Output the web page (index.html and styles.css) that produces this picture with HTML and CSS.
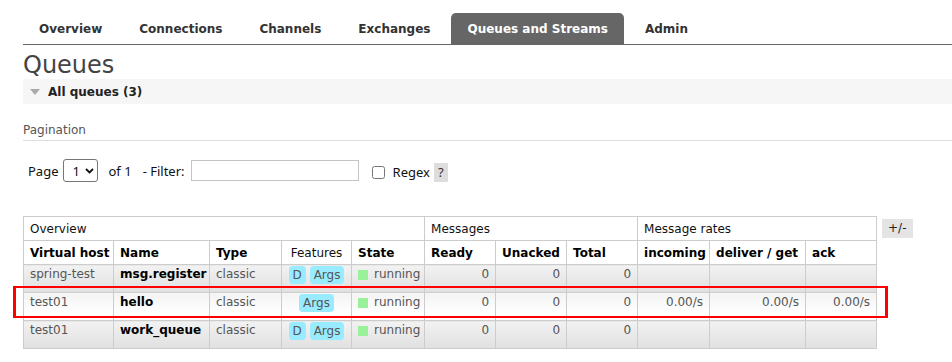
FILE: index.html
```html
<!DOCTYPE html>
<html lang="en">
<head>
    <meta charset="UTF-8">
    <meta name="viewport" content="width=device-width, initial-scale=1.0">
    <title>RabbitMQ Management - Queues</title>
    <link rel="stylesheet" href="styles.css">
</head>
<body>

    <ul class="tabs">
        <li><a href="#">Overview</a></li>
        <li><a href="#">Connections</a></li>
        <li><a href="#">Channels</a></li>
        <li><a href="#">Exchanges</a></li>
        <li class="active"><a href="#">Queues and Streams</a></li>
        <li><a href="#">Admin</a></li>
    </ul>

    <div class="main">
        <h1>Queues</h1>

        <div class="section">
            <h2 class="section-title"><span class="arrow"></span>All queues (3)</h2>

            <div class="section-body">
                <h3 class="pagination-title">Pagination</h3>

                <div class="filter-row">
                    <span class="page-label">Page</span>
                    <div class="select-box">
                        <span>1</span>
                        <svg width="9" height="6" viewBox="0 0 9 6"><path d="M1 1 L4.5 4.5 L8 1" fill="none" stroke="#111" stroke-width="1.8"/></svg>
                    </div>
                    <span class="of-label">of 1</span>
                    <span class="filter-label">- Filter:</span>
                    <input type="text" class="filter-input">
                    <label class="regex"><input type="checkbox"> Regex</label>
                    <span class="help">?</span>
                </div>

                <div class="table-area">
                    <table class="list">
                        <colgroup>
                            <col class="w90"><col class="w96"><col class="w72"><col class="w70"><col class="w73">
                            <col class="w71"><col class="w71"><col class="w71">
                            <col class="w72"><col class="w96"><col class="w71">
                        </colgroup>
                        <thead>
                            <tr>
                                <th colspan="5">Overview</th>
                                <th colspan="3">Messages</th>
                                <th colspan="3">Message rates</th>
                            </tr>
                            <tr class="sub">
                                <th>Virtual host</th>
                                <th>Name</th>
                                <th>Type</th>
                                <th class="plain">Features</th>
                                <th>State</th>
                                <th>Ready</th>
                                <th>Unacked</th>
                                <th>Total</th>
                                <th>incoming</th>
                                <th>deliver / get</th>
                                <th>ack</th>
                            </tr>
                        </thead>
                        <tbody>
                            <tr class="alt1">
                                <td>spring-test</td>
                                <td class="name">msg.register</td>
                                <td>classic</td>
                                <td class="features"><abbr class="badge">D</abbr> <abbr class="badge">Args</abbr></td>
                                <td><span class="state"></span>running</td>
                                <td class="num">0</td>
                                <td class="num">0</td>
                                <td class="num">0</td>
                                <td class="num"></td>
                                <td class="num"></td>
                                <td class="num"></td>
                            </tr>
                            <tr class="alt2">
                                <td>test01</td>
                                <td class="name">hello</td>
                                <td>classic</td>
                                <td class="features"><abbr class="badge">Args</abbr></td>
                                <td><span class="state"></span>running</td>
                                <td class="num">0</td>
                                <td class="num">0</td>
                                <td class="num">0</td>
                                <td class="num">0.00/s</td>
                                <td class="num">0.00/s</td>
                                <td class="num">0.00/s</td>
                            </tr>
                            <tr class="alt1">
                                <td>test01</td>
                                <td class="name">work_queue</td>
                                <td>classic</td>
                                <td class="features"><abbr class="badge">D</abbr> <abbr class="badge">Args</abbr></td>
                                <td><span class="state"></span>running</td>
                                <td class="num">0</td>
                                <td class="num">0</td>
                                <td class="num">0</td>
                                <td class="num"></td>
                                <td class="num"></td>
                                <td class="num"></td>
                            </tr>
                        </tbody>
                    </table>
                    <span class="toggle">+/-</span>
                    <div class="highlight"></div>
                </div>
            </div>
        </div>
    </div>

</body>
</html>
```

FILE: styles.css
```css
body {
    font-family: "DejaVu Sans", Verdana, sans-serif;
    font-size: 12px;
    color: #484848;
    background: #fff;
    margin: 0;
}
a {
    text-decoration: none;
}
.tabs {
    display: flex;
    list-style: none;
    margin: 13px 0 0 23px;
    padding: 0;
    border-bottom: 1px solid #666;
}
.tabs li {
    margin-right: 5px;
    border-radius: 5px 5px 0 0;
}
.tabs a {
    display: block;
    padding: 2px 16px 0;
    line-height: 29px;
    font-weight: bold;
    color: #333;
}
.tabs li.active {
    background: #666;
}
.tabs li.active a {
    color: #fff;
}
.main {
    margin-left: 23px;
}
h1 {
    margin: 0;
    padding-top: 6px;
    font-size: 24px;
    line-height: 28px;
    font-weight: normal;
    color: #444;
}
.section-title {
    display: flex;
    align-items: center;
    margin: 0;
    height: 25px;
    padding-top: 1px;
    box-sizing: border-box;
    background: #f6f6f6;
    font-size: 12px;
    color: #222;
}
.arrow {
    width: 0;
    height: 0;
    margin: 0 8px 0 7px;
    border-left: 5px solid transparent;
    border-right: 5px solid transparent;
    border-top: 6px solid #aaa;
}
.pagination-title {
    margin: 18px 0 0;
    padding-bottom: 2px;
    font-size: 12px;
    line-height: 16px;
    font-weight: normal;
    color: #555;
    border-bottom: 1px solid #ddd;
}
.filter-row {
    display: flex;
    align-items: center;
    margin-top: 18px;
    padding-left: 5px;
    height: 23px;
    font-family: "Noto Sans", "Open Sans", sans-serif;
    font-size: 13px;
    color: #111;
}
.select-box {
    display: flex;
    align-items: center;
    justify-content: space-between;
    box-sizing: border-box;
    width: 35px;
    height: 23px;
    margin-left: 4px;
    padding: 0 3px 0 9px;
    border: 1px solid #767676;
    border-radius: 3px;
}
.of-label {
    margin-left: 11px;
}
.filter-label {
    margin-left: 11px;
}
.filter-input {
    box-sizing: border-box;
    width: 168px;
    height: 21px;
    margin: 0 0 0 6px;
    border: 1px solid #c4c4c4;
}
.regex {
    display: flex;
    align-items: center;
    margin-left: 10px;
    padding-top: 3px;
}
.regex input {
    margin: 0 8px 0 3px;
    width: 13px;
    height: 13px;
}
.help {
    margin-left: 4px;
    margin-top: 3px;
    padding: 0 4px;
    line-height: 19px;
    background: #ddd;
    color: #333;
}
.table-area {
    position: relative;
    display: flex;
    align-items: flex-start;
    gap: 5px;
    margin-top: 34px;
}
.list {
    border-collapse: collapse;
    table-layout: fixed;
    width: 854px;
}
.w70 { width: 70px; }
.w71 { width: 71px; }
.w72 { width: 72px; }
.w73 { width: 73px; }
.w90 { width: 90px; }
.w96 { width: 96px; }
.list th, .list td {
    border: 1px solid #ccc;
    white-space: nowrap;
    overflow: hidden;
}
.list th {
    padding: 3px 6px 2px;
    line-height: 18px;
    text-align: left;
    font-weight: normal;
    color: #111;
    background: #fff;
}
.list tr.sub th {
    font-weight: bold;
    color: #000;
}
.list tr.sub th.plain {
    font-weight: normal;
    text-align: center;
    color: #111;
}
.list td {
    padding: 0 6px 8px;
    line-height: 18px;
    vertical-align: top;
    color: #555;
}
.list tr.alt1 td {
    background: linear-gradient(#f2f2f2, #e0e0e0);
}
.list tr.alt2 td {
    background: linear-gradient(#f3f3f3, #fff 70%);
}
.list td.name {
    font-weight: bold;
    color: #000;
}
.list td.num {
    text-align: right;
}
.list td.features {
    text-align: center;
}
.badge {
    display: inline-block;
    padding: 1px 4px;
    line-height: 16px;
    vertical-align: -1px;
    border-radius: 4px;
    background: #99ebff;
    color: #555;
    text-decoration: none;
}
.state {
    display: inline-block;
    width: 10px;
    height: 10px;
    margin-right: 6px;
    vertical-align: -2px;
    background: #99f299;
}
.toggle {
    margin-top: 3px;
    padding: 0 6px;
    line-height: 19px;
    font-size: 12px;
    background: #e4e4e4;
    color: #222;
}
.highlight {
    position: absolute;
    left: -10px;
    top: 70px;
    width: 875px;
    height: 32px;
    box-sizing: border-box;
    border: 2px solid #f00;
    border-left-width: 3px;
    border-right-width: 3px;
}
```
